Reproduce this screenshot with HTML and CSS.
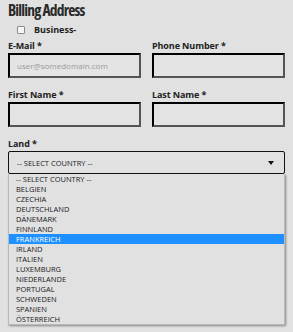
FILE: index.html
```html
<!DOCTYPE html>
<html>
<head>
<meta charset="utf-8">
<link rel="stylesheet" href="styles.css">
</head>
<body>
<div class="page">
  <h2 class="title">Billing Address</h2>
  <label class="check"><span class="box"></span><span class="check-text">Business-</span></label>
  <div class="grid">
    <div class="field">
      <div class="label">E-Mail *</div>
      <div class="input placeholder">user@somedomain.com</div>
    </div>
    <div class="field">
      <div class="label">Phone Number *</div>
      <div class="input"></div>
    </div>
    <div class="field">
      <div class="label">First Name *</div>
      <div class="input"></div>
    </div>
    <div class="field">
      <div class="label">Last Name *</div>
      <div class="input"></div>
    </div>
  </div>
  <div class="field land">
    <div class="label">Land *</div>
    <div class="select-wrap">
      <div class="select"><span>-- SELECT COUNTRY --</span><span class="arrow"></span></div>
      <ul class="menu">
        <li>-- SELECT COUNTRY --</li>
        <li>BELGIEN</li>
        <li>CZECHIA</li>
        <li>DEUTSCHLAND</li>
        <li>DÄNEMARK</li>
        <li>FINNLAND</li>
        <li class="active">FRANKREICH</li>
        <li>IRLAND</li>
        <li>ITALIEN</li>
        <li>LUXEMBURG</li>
        <li>NIEDERLANDE</li>
        <li>PORTUGAL</li>
        <li>SCHWEDEN</li>
        <li>SPANIEN</li>
        <li>ÖSTERREICH</li>
      </ul>
    </div>
  </div>
</div>
</body>
</html>
```

FILE: styles.css
```css
html, body {
  margin: 0;
  padding: 0;
  background: #e1e1e1;
  height: 100%;
}
body {
  font-family: "Open Sans", "DejaVu Sans", sans-serif;
  color: #222;
}
.page {
  padding: 1px 8px 0;
}
.title {
  margin: 0;
  font-size: 15.5px;
  line-height: 18px;
  font-weight: 700;
  font-stretch: 75%;
  letter-spacing: -0.8px;
  color: #2a2a2a;
}
.check {
  display: flex;
  align-items: center;
  height: 21px;
  margin-top: 0;
  padding-left: 9px;
}
.box {
  width: 6px;
  height: 6px;
  border: 1px solid #8a8a8a;
  border-radius: 1px;
  background: #f7f7f7;
}
.check-text {
  margin-left: 9px;
  font-size: 9px;
  font-weight: 700;
  color: #222;
}
.grid {
  display: grid;
  grid-template-columns: 1fr 1fr;
  column-gap: 11px;
  row-gap: 11px;
}
.field {
  display: flex;
  flex-direction: column;
}
.label {
  font-size: 9px;
  line-height: 12px;
  font-weight: 700;
  color: #222;
  letter-spacing: -0.1px;
  margin-bottom: 1px;
}
.input {
  height: 21px;
  border: 2px inset #000;
  background: #e4e4e4;
  box-sizing: content-box;
  font-size: 8px;
  line-height: 21px;
  padding-left: 7px;
}
.placeholder {
  color: #9a9a9a;
}
.land {
  margin-top: 11px;
}
.select-wrap {
  position: relative;
}
.select {
  height: 21px;
  border: 1px solid #111;
  border-radius: 2px;
  display: flex;
  align-items: center;
  justify-content: space-between;
  padding: 0 8px 0 8px;
  font-size: 7.5px;
  color: #222;
  background: #e1e1e1;
}
.arrow {
  width: 0;
  height: 0;
  border-left: 3px solid transparent;
  border-right: 3px solid transparent;
  border-top: 4px solid #111;
  margin-right: 2px;
}
.menu {
  list-style: none;
  margin: 0;
  padding: 0;
  position: absolute;
  left: 0;
  right: 0;
  top: 23px;
  background: #e1e1e1;
  border: 1px solid #b9b9b9;
  border-top: none;
  box-shadow: 1px 1px 2px rgba(0, 0, 0, 0.4);
}
.menu li {
  height: 10px;
  line-height: 10px;
  font-size: 7.5px;
  padding-left: 7px;
  color: #1a1a1a;
}
.menu li.active {
  background: #1e90ff;
  color: #fff;
}
```
